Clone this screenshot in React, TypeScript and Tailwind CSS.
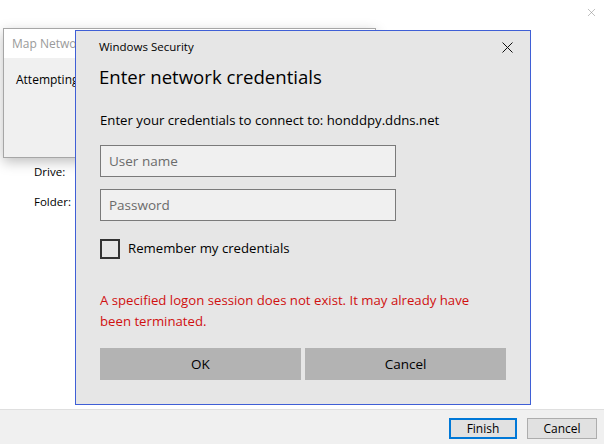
import { X } from "lucide-react";

const font = { fontFamily: '"Open Sans", "Noto Sans", sans-serif' };

function CloseGlyph({ className }: { className?: string }) {
	return (
		<svg width="11" height="11" viewBox="0 0 11 11" className={className}>
			<path d="M0.5 0.5 L10.5 10.5 M10.5 0.5 L0.5 10.5" stroke="currentColor" strokeWidth="1" fill="none" />
		</svg>
	);
}

// the wizard's progress box, mostly hidden behind the credentials dialog
function MapNetworkWindow() {
	return (
		<div className="absolute left-[3px] top-[28px] w-[373px] h-[130px] border border-[#a6a6a6] bg-[#f0f0f0] shadow-[0_4px_12px_rgba(0,0,0,0.25)]">
			<div className="h-[29px] bg-white flex items-center pl-[8px] text-[12px] text-[#9a9a9a]">
				<span className="whitespace-nowrap">Map Netwo</span>
			</div>
			<div className="pl-[12px] pt-[13px] text-[12px] text-black">
				<span className="whitespace-nowrap">Attempting</span>
			</div>
		</div>
	);
}

function SecurityDialog() {
	return (
		<div className="absolute left-[75px] top-[30px] w-[456px] h-[375px] border border-[#3f5fd6] bg-[#e6e6e6]">
			<div className="flex items-start justify-between pl-[23px] pr-[17px] pt-[8px]">
				<span className="text-[11.5px] leading-[16px] text-black">Windows Security</span>
				<CloseGlyph className="mt-[3px] text-[#111]" />
			</div>
			<h1 className="pl-[23px] mt-[8px] text-[18.6px] leading-[28px] text-black">Enter network credentials</h1>
			<p className="pl-[24px] mt-[19px] text-[13.2px] leading-[20px] text-black">
				Enter your credentials to connect to: honddpy.ddns.net
			</p>
			<div className="pl-[24px] mt-[15px] flex flex-col gap-[12px]">
				<div className="w-[296px] h-[32px] border border-[#7a7a7a] bg-[#f0f0f0] flex items-center pl-[8px] text-[13.5px] text-[#6b6b6b]">
					User name
				</div>
				<div className="w-[296px] h-[32px] border border-[#7a7a7a] bg-[#f0f0f0] flex items-center pl-[8px] text-[13.5px] text-[#6b6b6b]">
					Password
				</div>
			</div>
			<label className="pl-[24px] mt-[18px] flex items-center gap-[8px]">
				<span className="w-[20px] h-[20px] border-2 border-[#333]" />
				<span className="text-[13.2px] text-black">Remember my credentials</span>
			</label>
			<p className="pl-[24px] pr-[50px] mt-[31px] text-[13.2px] leading-[21px] text-[#d01010]">
				A specified logon session does not exist. It may already have been terminated.
			</p>
			<div className="pl-[24px] mt-[16px] flex gap-[4px]">
				<button className="w-[201px] h-[32px] bg-[#b3b3b3] text-[13.5px] text-black">OK</button>
				<button className="w-[201px] h-[32px] bg-[#b3b3b3] text-[13.5px] text-black">Cancel</button>
			</div>
		</div>
	);
}

export default function App() {
	return (
		<div className="w-[604px] h-[444px] bg-white flex flex-col overflow-hidden" style={font}>
			<div className="relative flex-1">
				<div className="flex justify-end pr-[6px] pt-[6px]">
					<X size={13} strokeWidth={1} className="text-[#8a8a8a]" />
				</div>
				<div className="pl-[34px] pt-[143px] flex flex-col gap-[10px] text-[11.5px] leading-[20px] text-black">
					<span>Drive:</span>
					<span>Folder:</span>
				</div>
				<MapNetworkWindow />
				<SecurityDialog />
			</div>
			<div className="h-[35px] border-t border-[#dfdfdf] bg-[#f0f0f0] flex items-start justify-end gap-[10px] pr-[7px] pt-[8px]">
				<button className="w-[68px] h-[21px] border-2 border-[#0078d7] bg-[#e1e1e1] text-[12px] text-black">Finish</button>
				<button className="w-[70px] h-[21px] border border-[#adadad] bg-[#e1e1e1] text-[12px] text-black">Cancel</button>
			</div>
		</div>
	);
}
